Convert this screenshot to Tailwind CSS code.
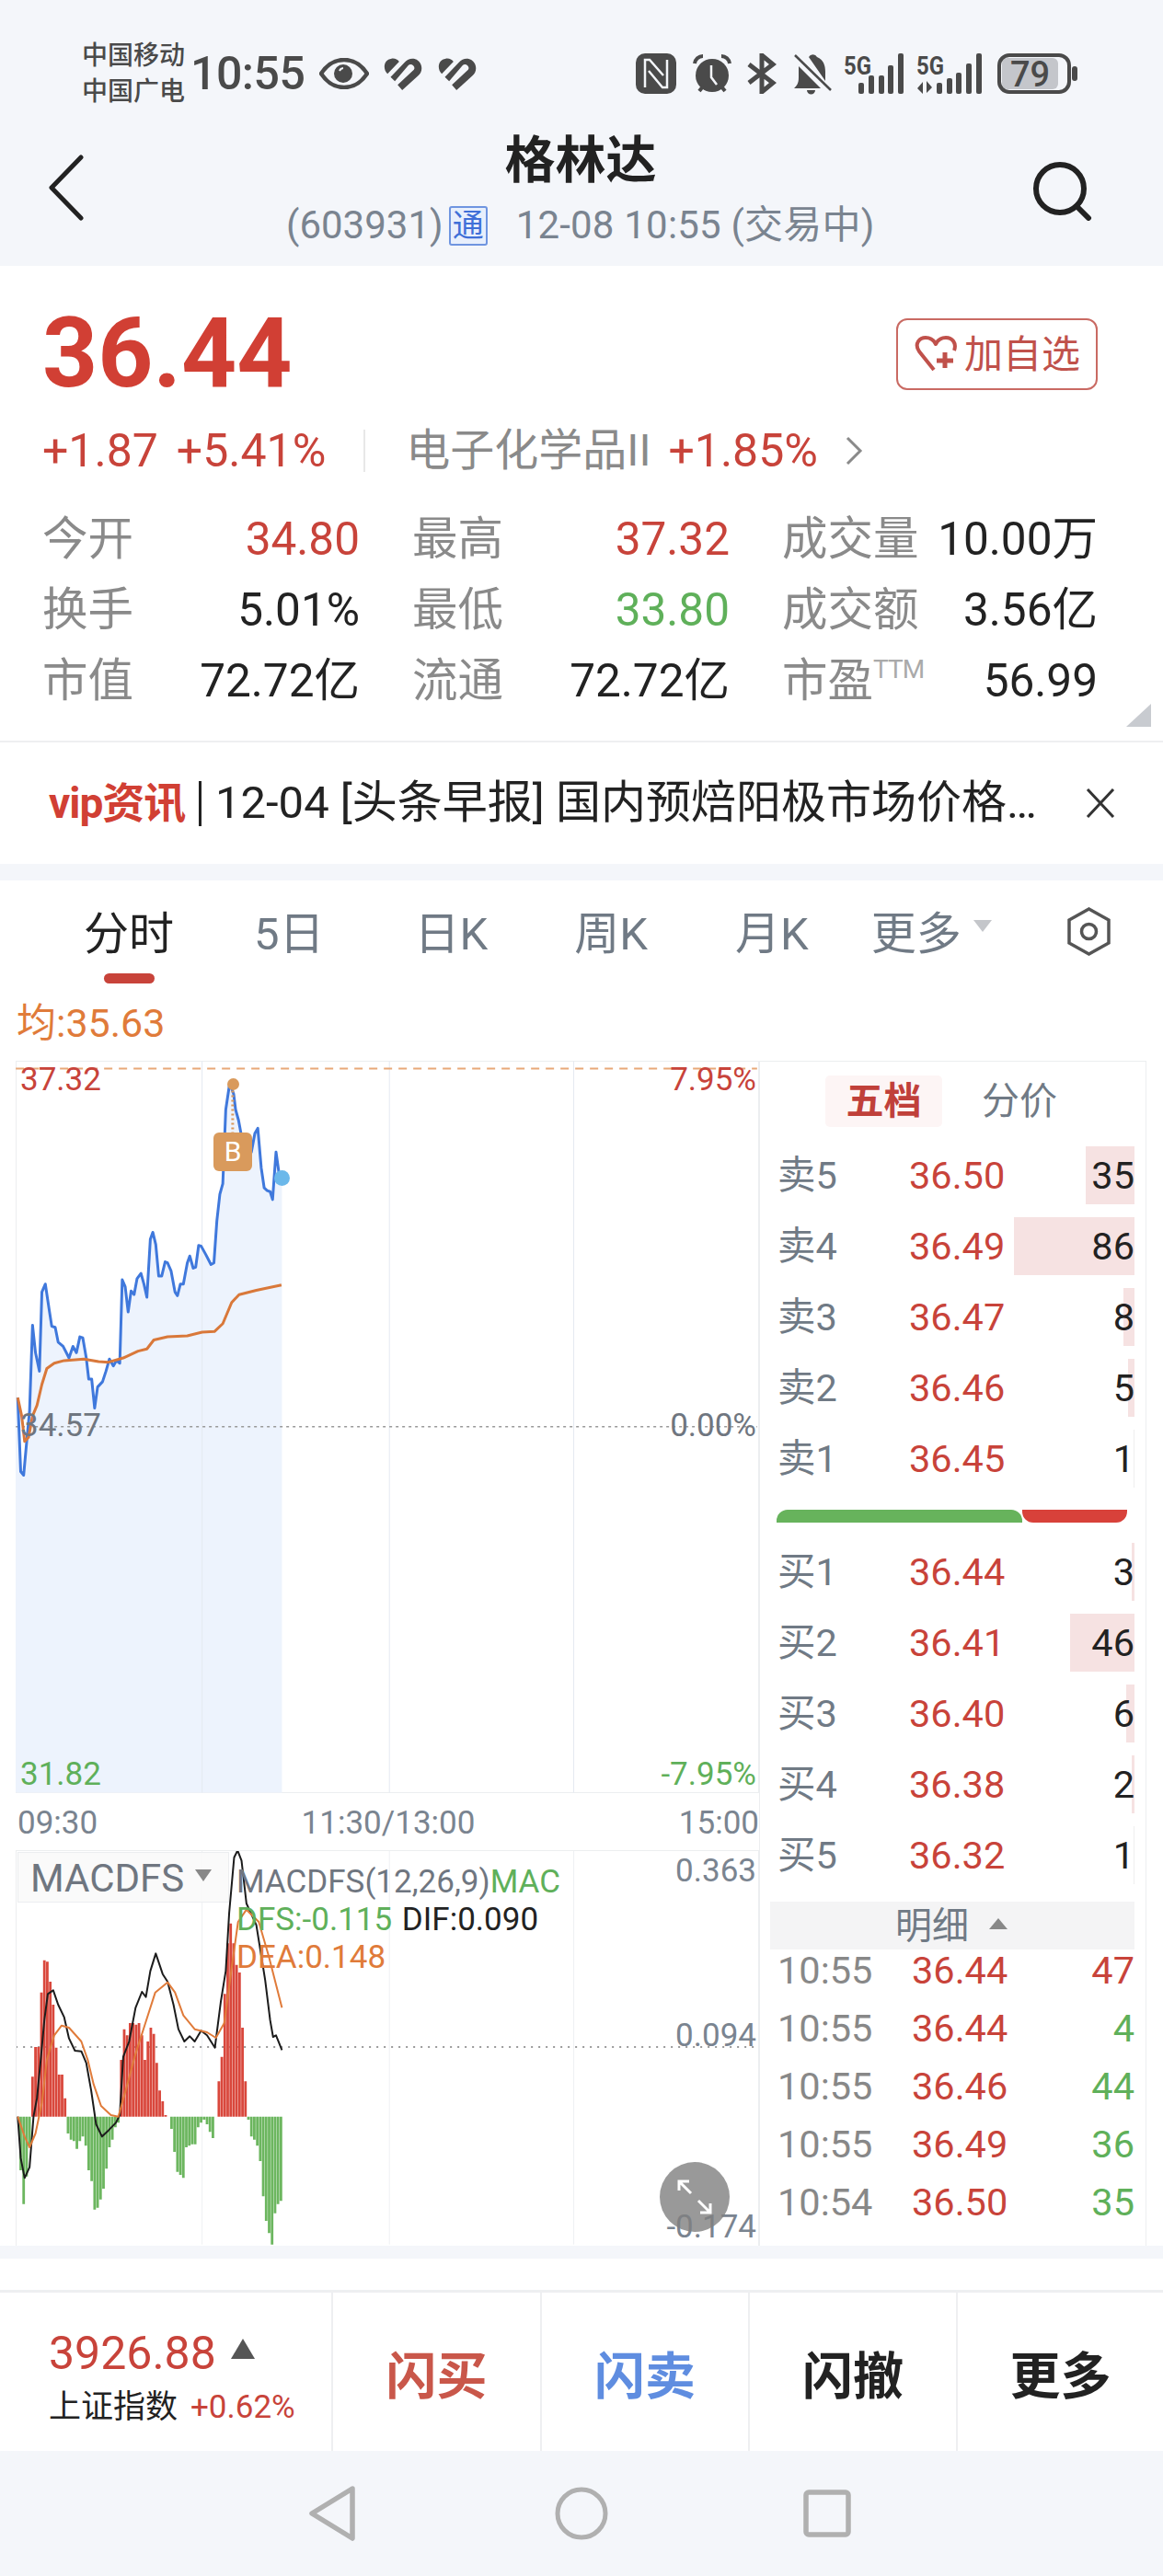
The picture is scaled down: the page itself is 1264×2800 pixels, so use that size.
<!DOCTYPE html>
<html lang="zh"><head><meta charset="utf-8">
<script src="https://cdn.jsdelivr.net/npm/@tailwindcss/browser@4"></script>
<title>格林达</title></head>
<body class="m-0">
<div class="w-[1264px] h-[2800px] bg-[#f4f6fa] overflow-hidden font-[Roboto,'Noto_Sans_CJK_SC',sans-serif] text-[#222]">

<!-- status + nav -->
<header class="h-[289px] relative">
  <div class="h-[130px] pt-[30px] flex items-center pl-[89px]">
    <div class="flex flex-col w-[118px] text-[28px] leading-[39px] font-medium text-[#4a4a4a] whitespace-nowrap"><span>中国移动</span><span>中国广电</span></div>
    <span class="text-[50px] leading-[48px] font-medium text-[#4a4a4a] w-[140px] tracking-[-0.5px]">10:55</span>
    <svg class="w-[54px] h-[34px]" viewBox="0 0 54 34"><path d="M2 17C10 5 18 2 27 2s17 3 25 15c-8 12-16 15-25 15S10 29 2 17z" fill="none" stroke="#4a4a4a" stroke-width="4.5"/><circle cx="26" cy="17" r="10" fill="#4a4a4a"/><path d="M22 14a5 5 0 0 1 4-3" stroke="#f4f6fa" stroke-width="2" fill="none"/></svg>
    <svg class="w-[42px] h-[35px] ml-[16px]" viewBox="0 0 125 105"><path d="M12 52C-5 35 0 5 25 2c10-2 20 3 25 10zM22 62L68 14C85-5 115 0 122 25c4 15-2 25-10 33L60 105 45 88 98 38c7-8-8-23-18-14L36 76z" fill="#4a4a4a"/></svg>
    <svg class="w-[42px] h-[35px] ml-[17px]" viewBox="0 0 125 105"><path d="M12 52C-5 35 0 5 25 2c10-2 20 3 25 10zM22 62L68 14C85-5 115 0 122 25c4 15-2 25-10 33L60 105 45 88 98 38c7-8-8-23-18-14L36 76z" fill="#4a4a4a"/></svg>
    <!-- right icons -->
    <svg class="w-[44px] h-[44px] ml-[173px]" viewBox="0 0 44 44"><rect width="44" height="44" rx="10" fill="#4a4a4a"/><path d="M10 37V7h5l15 17M34 7v30h-5L14 19" fill="none" stroke="#f4f6fa" stroke-width="2.5"/></svg>
    <svg class="w-[44px] h-[44px] ml-[17px]" viewBox="0 0 44 44"><circle cx="22" cy="24" r="18" fill="#4a4a4a"/><path d="M3 11a9 9 0 0 1 9-8M41 11a9 9 0 0 0-9-8M8 41l4-5M36 41l-4-5" stroke="#4a4a4a" stroke-width="4" fill="none"/><path d="M21 13v13l6 8" stroke="#f4f6fa" stroke-width="2.5" fill="none"/></svg>
    <svg class="w-[33px] h-[44px] ml-[16px]" viewBox="0 0 33 44"><path d="M2 12l26 20-12 10V2l12 10L2 32" fill="none" stroke="#4a4a4a" stroke-width="5"/></svg>
    <svg class="w-[42px] h-[46px] ml-[17px]" viewBox="0 0 42 46"><path d="M17 5a5 5 0 0 1 9 0c7 3 9 9 9 16v10zM6 15l24 24H1c3-3 5-5 5-12zM15 41h9a4.500 4.500 0 0 1-9 0z" fill="#4a4a4a"/><path d="M2 3l39 38" stroke="#4a4a4a" stroke-width="2.500"/></svg>
    <svg class="w-[66px] h-[46px] ml-[13px]" viewBox="0 0 66 46"><text x="0" y="24" font-size="27" font-weight="700" fill="#4a4a4a" textLength="30" lengthAdjust="spacingAndGlyphs">5G</text><g fill="#4a4a4a"><rect x="16" y="33" width="6" height="12" rx="2"/><rect x="27" y="25" width="6" height="20" rx="2"/><rect x="38" y="25" width="6" height="20" rx="2"/><rect x="48" y="14" width="6" height="31" rx="2"/><rect x="59" y="1" width="6" height="44" rx="2"/></g></svg>
    <svg class="w-[72px] h-[46px] ml-[13px]" viewBox="0 0 72 46"><text x="0" y="24" font-size="27" font-weight="700" fill="#4a4a4a" textLength="30" lengthAdjust="spacingAndGlyphs">5G</text><g fill="#4a4a4a"><path d="M7 32v13l-6-6zM11 31v13l6-6z"/><rect x="22" y="33" width="6" height="12" rx="2"/><rect x="33" y="28" width="6" height="17" rx="2"/><rect x="43" y="22" width="6" height="23" rx="2"/><rect x="54" y="12" width="6" height="33" rx="2"/><rect x="65" y="1" width="6" height="44" rx="2"/></g></svg>
    <svg class="w-[88px] h-[44px] ml-[16px]" viewBox="0 0 88 44"><rect x="5" y="5" width="61" height="34" rx="6" fill="#c4c6cb"/><rect x="2" y="2" width="76" height="40" rx="11" fill="none" stroke="#4a4a4a" stroke-width="4"/><rect x="81" y="14" width="6" height="16" rx="3" fill="#4a4a4a"/><text x="14" y="36" font-size="38" font-weight="500" fill="#4a4a4a">79</text></svg>
  </div>
  <div class="relative h-[159px] text-center">
    <svg class="absolute left-[52px] top-[38px] w-[40px] h-[72px]" viewBox="0 0 40 72"><path d="M36 3L4 36l32 33" fill="none" stroke="#222" stroke-width="5" stroke-linecap="round" stroke-linejoin="round"/></svg>
    <div class="text-[55px] leading-[54px] pt-[17px] font-bold -ml-[2px]">格林达</div>
    <div class="absolute left-[311px] top-[92px] flex items-center h-[46px] text-[42px] leading-[46px] text-[#7a8490] whitespace-nowrap">
      <span>(603931)</span>
      <span class="ml-[6px] w-[42px] h-[43px] border-2 border-[#6f95e0] bg-[#e8effc] rounded-[3px] text-[34px] leading-[38px] text-[#3f6fd8] text-center">通</span>
      <span class="ml-[31px] tracking-[0.2px]">12-08 10:55 (交易中)</span>
    </div>
    <svg class="absolute left-[1120px] top-[42px] w-[68px] h-[68px]" viewBox="0 0 68 68"><circle cx="32" cy="33" r="26" fill="none" stroke="#222" stroke-width="6"/><path d="M50 52l13 13" stroke="#222" stroke-width="6" stroke-linecap="round"/></svg>
  </div>
</header>

<!-- quote -->
<section class="relative h-[518px] bg-white border-b-2 border-[#eeeff1] pt-[57px]">
  <div class="flex items-center justify-between h-[78px] pl-[46px] pr-[71px]">
    <span class="text-[105px] leading-[78px] font-bold text-[#d13f34]">36.44</span>
    <div class="flex items-center w-[219px] h-[78px] border-2 border-[#c96a63] rounded-[12px] pl-[18px] text-[42px] text-[#c0514b]">
      <svg class="w-[48px] h-[40px] mr-[6px]" viewBox="0 0 48 40"><path d="M21 37L5 17C-1 8 6 2 12 2c5 0 9 3 11 7 2-4 6-7 11-7 7 0 12 6 9 14" fill="none" stroke="#c0514b" stroke-width="4" stroke-linejoin="round"/><path d="M33 18v17M24 27h18" stroke="#c0514b" stroke-width="5"/></svg>
      <span>加自选</span>
    </div>
  </div>
  <div class="flex items-center h-[46px] mt-[43px] pl-[46px] text-[50px] leading-[46px] whitespace-nowrap">
    <span class="text-[#c8433a]">+1.87</span>
    <span class="text-[#c8433a] ml-[20px]">+5.41%</span>
    <span class="w-[2px] h-[46px] bg-[#e8e8e8] ml-[41px]"></span>
    <span class="text-[#8a8a8a] text-[48px] ml-[44px]">电子化学品II</span>
    <span class="text-[#c8433a] ml-[19px]">+1.85%</span>
    <svg class="w-[20px] h-[34px] ml-[29px]" viewBox="0 0 20 34"><path d="M3 3l14 14L3 31" fill="none" stroke="#8a8a8a" stroke-width="3"/></svg>
  </div>
  <div class="grid grid-cols-[345px_345px_343px] gap-x-[57px] pl-[46px] mt-[35px] text-[49.5px] leading-[77px] whitespace-nowrap">
    <div class="flex justify-between"><span class="text-[#8a8a8a]">今开</span><span class="text-[#c8433a]">34.80</span></div>
    <div class="flex justify-between"><span class="text-[#8a8a8a]">最高</span><span class="text-[#c8433a]">37.32</span></div>
    <div class="flex justify-between"><span class="text-[#8a8a8a]">成交量</span><span>10.00万</span></div>
    <div class="flex justify-between"><span class="text-[#8a8a8a]">换手</span><span>5.01%</span></div>
    <div class="flex justify-between"><span class="text-[#8a8a8a]">最低</span><span class="text-[#5fb05a]">33.80</span></div>
    <div class="flex justify-between"><span class="text-[#8a8a8a]">成交额</span><span>3.56亿</span></div>
    <div class="flex justify-between"><span class="text-[#8a8a8a]">市值</span><span>72.72亿</span></div>
    <div class="flex justify-between"><span class="text-[#8a8a8a]">流通</span><span>72.72亿</span></div>
    <div class="flex justify-between"><span class="text-[#8a8a8a]">市盈<sup class="text-[28px] leading-none align-[20px] text-[#aaa] tracking-[-1px] static">TTM</sup></span><span>56.99</span></div>
  </div>
  <svg class="absolute left-[1224px] top-[476px] w-[27px] h-[25px]" viewBox="0 0 27 25"><path d="M0 25L27 0v25z" fill="#c8cbd0"/></svg>
</section>

<!-- news -->
<section class="h-[132px] bg-white flex items-center pl-[53px] whitespace-nowrap">
  <span class="text-[46px] font-bold text-[#d13f34] w-[163px] tracking-[-1px]">vip资讯</span>
  <span class="w-[3px] h-[49px] bg-[#222]"></span>
  <span class="ml-[15px] text-[49px] leading-[50px] w-[891px]">12-04 [头条早报] 国内预焙阳极市场价格…</span>
  <svg class="w-[32px] h-[32px] ml-[55px]" viewBox="0 0 32 32"><path d="M2 1l28 30M30 1L2 31" stroke="#333" stroke-width="3" fill="none"/></svg>
</section>

<!-- market -->
<main class="mt-[18px] h-[1484px] bg-white overflow-hidden">
  <div class="relative h-[118px] flex items-center pl-[91px] text-[49px] leading-[118px] text-[#707a85] whitespace-nowrap">
    <span class="text-[#222]">分时</span>
    <span class="ml-[87px]">5日</span>
    <span class="ml-[98px]">日K</span>
    <span class="ml-[94px]">周K</span>
    <span class="ml-[95px]">月K</span>
    <span class="ml-[68px]">更多</span>
    <svg class="absolute left-[1058px] top-[43px] w-[20px] h-[13px]" viewBox="0 0 20 13"><path d="M0 0h20L10 13z" fill="#c4c6ca"/></svg>
    <svg class="absolute left-[1160px] top-[29px] w-[47px] h-[53px]" viewBox="0 0 47 53"><path d="M23.500 2L45 14v25L23.500 51 2 39V14z" fill="none" stroke="#555" stroke-width="3.500"/><circle cx="23.500" cy="26.500" r="8" fill="none" stroke="#555" stroke-width="3.500"/></svg>
    <span class="absolute left-[113px] top-[101px] w-[55px] h-[11px] rounded-full bg-[#c8433a]"></span>
  </div>
  <div class="h-[78px] pl-[18px] text-[43px] leading-[74px] text-[#e07b3a]">均:35.63</div>

  <div class="flex">
    <!-- left charts -->
    <div class="w-[808px] ml-[17px] shrink-0">
      <div class="relative h-[796px] border border-[#eceef0]">
        <svg class="absolute left-[-18px] top-[-74px] w-[840px] h-[900px]" viewBox="0 0 1568 1568" preserveAspectRatio="none" fill="none">
          <path fill="#edf3fd" d="M36 765 42 905 48 912 54 850 60 790 66 628 72 680 80 715 85 565 92 550 100 600 105 630 112 632 118 660 128 668 140 690 148 668 155 680 162 650 168 652 175 690 180 730 186 730 192 785 198 745 208 735 215 715 222 692 230 705 236 695 243 700 248 542 254 555 260 603 266 563 272 570 278 540 286 530 292 550 298 575 305 465 310 452 316 475 322 535 328 535 335 508 340 510 347 525 355 565 360 572 366 550 372 550 380 510 385 497 392 520 397 518 403 477 408 478 418 495 428 513 434 510 440 430 446 380 452 360 458 220 466 170 474 190 478 220 484 240 490 270 500 320 510 300 517 265 523 255 530 330 536 368 542 373 548 375 553 390 560 300 566 340 572 349V1513H32V765z"/>
          <path d="M410 128V1513M790 128V1513M1164 128V1513" stroke="#e4e9f1" stroke-width="1" vector-effect="non-scaling-stroke"/>
          <path d="M32 142H1536" stroke="#e8a878" stroke-width="2" stroke-dasharray="9 7" vector-effect="non-scaling-stroke"/>
          <path d="M32 820H1536" stroke="#9a9a9a" stroke-width="1.500" stroke-dasharray="3 4" vector-effect="non-scaling-stroke"/>
          <path d="M36 765 42 905 48 912 54 850 60 790 66 628 72 680 80 715 85 565 92 550 100 600 105 630 112 632 118 660 128 668 140 690 148 668 155 680 162 650 168 652 175 690 180 730 186 730 192 785 198 745 208 735 215 715 222 692 230 705 236 695 243 700 248 542 254 555 260 603 266 563 272 570 278 540 286 530 292 550 298 575 305 465 310 452 316 475 322 535 328 535 335 508 340 510 347 525 355 565 360 572 366 550 372 550 380 510 385 497 392 520 397 518 403 477 408 478 418 495 428 513 434 510 440 430 446 380 452 360 458 220 466 170 474 190 478 220 484 240 490 270 500 320 510 300 517 265 523 255 530 330 536 368 542 373 548 375 553 390 560 300 566 340 572 349" stroke="#3f78dc" stroke-width="3" stroke-linejoin="round" vector-effect="non-scaling-stroke"/>
          <path d="M36 765 44 800 50 848 58 840 66 800 75 780 85 740 95 710 110 700 130 695 170 692 200 697 220 698 250 690 280 677 298 673 312 656 340 650 380 648 410 641 435 640 452 625 470 585 485 570 520 562 571 552" stroke="#d9783a" stroke-width="3" stroke-linejoin="round" vector-effect="non-scaling-stroke"/>
          <path d="M472 175V265" stroke="#d99a5c" stroke-width="3" stroke-dasharray="2 3" vector-effect="non-scaling-stroke"/>
        </svg>
        <span class="absolute left-[229px] top-[18px] w-[13px] h-[13px] rounded-full bg-[#d99a5c]"></span>
        <span class="absolute left-[214px] top-[77px] w-[42px] h-[42px] rounded-[6px] bg-[#d99a5c] text-white text-[30px] leading-[42px] text-center">B</span>
        <span class="absolute left-[280px] top-[118px] w-[17px] h-[17px] rounded-full bg-[#6bb8ea]"></span>
        <span class="absolute left-[4px] top-[0px] text-[35px] leading-[40px] text-[#c8433a]">37.32</span>
        <span class="absolute right-[2px] top-[0px] text-[35px] leading-[40px] text-[#c8433a]">7.95%</span>
        <span class="absolute left-[4px] top-[376px] text-[35px] leading-[40px] text-[#6f7680]">34.57</span>
        <span class="absolute right-[2px] top-[376px] text-[35px] leading-[40px] text-[#6f7680]">0.00%</span>
        <span class="absolute left-[4px] top-[755px] text-[35px] leading-[40px] text-[#5fb05a]">31.82</span>
        <span class="absolute right-[2px] top-[755px] text-[35px] leading-[40px] text-[#5fb05a]">-7.95%</span>
      </div>
      <div class="flex justify-between h-[62px] pt-[2px] text-[35px] leading-[62px] text-[#7a8490] pl-[2px]">
        <span>09:30</span><span>11:30/13:00</span><span>15:00</span>
      </div>
      <div class="relative h-[440px] border border-[#eceef0] overflow-hidden">
        <svg class="absolute left-[-18px] top-[-33px] w-[840px] h-[480px]" viewBox="0 0 1568 1440" preserveAspectRatio="none" fill="none">
          <path d="M410 97V1382M790 97V1382M1164 97V1382" stroke="#eef0f3" stroke-width="1" vector-effect="non-scaling-stroke"/>
          <path d="M32 738H1536" stroke="#9a9a9a" stroke-width="2" stroke-dasharray="2 6" vector-effect="non-scaling-stroke"/>
          <path stroke="#6cb65f" stroke-width="2.800" vector-effect="non-scaling-stroke" d="M42 965V1140M48 965V1250M54 965V1160M60 965V1060M138 965V1020M144 965V1040M150 965V1045M156 965V1070M162 965V1045M168 965V1030M174 965V1060M180 965V1140M186 965V1175M192 965V1268M198 965V1262M204 965V1235M210 965V1200M216 965V1135M222 965V1065M228 965V1040M234 965V1000M240 965V985M348 965V1005M354 965V1080M360 965V1145M366 965V1155M372 965V1165M378 965V1065M384 965V1060M390 965V1055M396 965V1055M402 965V1000M408 965V985M414 965V975M420 965V990M426 965V1015M432 965V1035M504 965V975M510 965V1030M516 965V1040M522 965V1060M528 965V1110M534 965V1225M540 965V1305M546 965V1345M552 965V1382M558 965V1280M564 965V1250M570 965V1240"/>
          <path stroke="#d9473c" stroke-width="2.800" vector-effect="non-scaling-stroke" d="M66 965V835M72 965V738M78 965V738M84 965V560M90 965V455M96 965V460M102 965V525M108 965V600M114 965V740M120 965V828M126 965V828M132 965V905M246 965V780M252 965V680M258 965V700M264 965V660M270 965V660M276 965V665M282 965V660M288 965V700M294 965V780M300 965V720M306 965V675M312 965V695M318 965V790M324 965V880M330 965V915M336 965V960M444 965V850M450 965V770M456 965V565M462 965V400M468 965V335M474 965V400M480 965V470M486 965V495M492 965V675M498 965V850"/>
          <path d="M36 965 42 1100 50 1165 60 1130 68 965 75 905 82 790 90 650 97 565 108 553 118 600 130 640 140 710 152 750 165 752 175 790 185 880 195 990 207 1030 220 1010 235 985 243 960 250 770 262 720 275 610 288 558 296 575 305 490 316 433 330 500 340 525 352 600 362 680 374 720 385 703 395 720 408 685 420 700 436 740 448 590 458 490 465 300 475 120 482 97 490 130 500 270 520 340 530 440 538 520 548 650 554 705 560 700 572 748" stroke="#1c1c1c" stroke-width="2" stroke-linejoin="round" vector-effect="non-scaling-stroke"/>
          <path d="M36 965 50 1030 60 1065 72 1020 85 920 95 780 110 700 125 668 140 675 165 720 178 780 190 860 205 930 225 960 240 965 255 880 275 760 295 660 315 560 340 527 355 560 372 635 395 680 420 690 438 708 455 660 470 480 483 330 500 290 525 330 545 440 572 610" stroke="#e07b3a" stroke-width="2" stroke-linejoin="round" vector-effect="non-scaling-stroke"/>
        </svg>
        <div class="absolute left-[1px] top-[1px] w-[230px] h-[55px] bg-[#fafafa]/90 border border-[#eceef0] flex items-center pl-[13px] pt-[2px] text-[42px] leading-[50px] text-[#6f7680]">MACDFS<svg class="w-[18px] h-[13px] ml-[12px] -mt-[6px]" viewBox="0 0 18 13"><path d="M0 0h18L9 13z" fill="#888"/></svg></div>
        <div class="absolute left-[239px] top-[13px] text-[35px] leading-[41px] whitespace-nowrap">
          <div class="text-[#6f7680]">MACDFS(12,26,9)<span class="text-[#5fb05a]">MAC</span></div>
          <div class="text-[#5fb05a]">DFS:-0.115 <span class="text-[#222] ml-[2px]">DIF:0.090</span></div>
          <div class="text-[#e07b3a]">DEA:0.148</div>
        </div>
        <span class="absolute right-[2px] top-[2px] text-[35px] leading-[40px] text-[#7a8490]">0.363</span>
        <span class="absolute right-[2px] top-[181px] text-[35px] leading-[40px] text-[#7a8490]">0.094</span>
        <span class="absolute right-[2px] top-[389px] text-[35px] leading-[40px] text-[#7a8490]">-0.174</span>
        <div class="absolute left-[699px] top-[338px] w-[76px] h-[76px] rounded-full bg-[#808080]/80 flex items-center justify-center">
          <svg class="w-[40px] h-[40px]" viewBox="0 0 40 40"><path d="M3 13V3h11M3 3l13 13M37 27v10H26M37 37L24 24" fill="none" stroke="#fff" stroke-width="3"/></svg>
        </div>
      </div>
    </div>

    <!-- order book -->
    <aside class="relative z-10 w-[421px] h-[1288px] border border-b-0 border-[#eceef0] text-[41.5px] leading-[63px] whitespace-nowrap overflow-hidden">
      <div class="flex h-[92px] pt-[15px] pl-[71px]">
        <span class="w-[127px] h-[56px] rounded-[5px] bg-[#fdf5f5] text-[41px] leading-[56px] font-bold text-center text-[#c0403a]">五档</span>
        <span class="ml-[43px] text-[41px] leading-[56px] text-[#707a85]">分价</span>
      </div>

      <div class="relative flex h-[63px] mb-[14px] pl-[19px] pr-[12px]"><span class="absolute right-[12px] inset-y-0 w-[53px] bg-[#f6e2e2]"></span><span class="relative w-[143px] text-[#707a85]">卖5</span><span class="relative text-[#c8433a]">36.50</span><span class="relative ml-auto">35</span></div>
      <div class="relative flex h-[63px] mb-[14px] pl-[19px] pr-[12px]"><span class="absolute right-[12px] inset-y-0 w-[131px] bg-[#f6e2e2]"></span><span class="relative w-[143px] text-[#707a85]">卖4</span><span class="relative text-[#c8433a]">36.49</span><span class="relative ml-auto">86</span></div>
      <div class="relative flex h-[63px] mb-[14px] pl-[19px] pr-[12px]"><span class="absolute right-[12px] inset-y-0 w-[12px] bg-[#f6e2e2]"></span><span class="relative w-[143px] text-[#707a85]">卖3</span><span class="relative text-[#c8433a]">36.47</span><span class="relative ml-auto">8</span></div>
      <div class="relative flex h-[63px] mb-[14px] pl-[19px] pr-[12px]"><span class="absolute right-[12px] inset-y-0 w-[7px] bg-[#f6e2e2]"></span><span class="relative w-[143px] text-[#707a85]">卖2</span><span class="relative text-[#c8433a]">36.46</span><span class="relative ml-auto">5</span></div>
      <div class="relative flex h-[63px] pl-[19px] pr-[12px]"><span class="absolute right-[12px] inset-y-0 w-[1px] bg-[#eee]"></span><span class="relative w-[143px] text-[#707a85]">卖1</span><span class="relative text-[#c8433a]">36.45</span><span class="relative ml-auto">1</span></div>

      <div class="flex h-[14px] mt-[24px] ml-[18px]">
        <span class="w-[267px] bg-[#67b35c] rounded-t-[12px]"></span>
        <span class="w-[114px] bg-[#d8413a] rounded-b-[12px]"></span>
      </div>

      <div class="relative flex h-[63px] mt-[22px] mb-[14px] pl-[19px] pr-[12px]"><span class="absolute right-[12px] inset-y-0 w-[3px] bg-[#f6e2e2]"></span><span class="relative w-[143px] text-[#707a85]">买1</span><span class="relative text-[#c8433a]">36.44</span><span class="relative ml-auto">3</span></div>
      <div class="relative flex h-[63px] mb-[14px] pl-[19px] pr-[12px]"><span class="absolute right-[12px] inset-y-0 w-[70px] bg-[#f6e2e2]"></span><span class="relative w-[143px] text-[#707a85]">买2</span><span class="relative text-[#c8433a]">36.41</span><span class="relative ml-auto">46</span></div>
      <div class="relative flex h-[63px] mb-[14px] pl-[19px] pr-[12px]"><span class="absolute right-[12px] inset-y-0 w-[9px] bg-[#f6e2e2]"></span><span class="relative w-[143px] text-[#707a85]">买3</span><span class="relative text-[#c8433a]">36.40</span><span class="relative ml-auto">6</span></div>
      <div class="relative flex h-[63px] mb-[14px] pl-[19px] pr-[12px]"><span class="absolute right-[12px] inset-y-0 w-[3px] bg-[#f6e2e2]"></span><span class="relative w-[143px] text-[#707a85]">买4</span><span class="relative text-[#c8433a]">36.38</span><span class="relative ml-auto">2</span></div>
      <div class="relative flex h-[63px] pl-[19px] pr-[12px]"><span class="absolute right-[12px] inset-y-0 w-[1px] bg-[#eee]"></span><span class="relative w-[143px] text-[#707a85]">买5</span><span class="relative text-[#c8433a]">36.32</span><span class="relative ml-auto">1</span></div>

      <div class="relative h-[52px] mt-[19px] ml-[11px] mr-[12px] bg-[#f4f4f5] text-center text-[40px] leading-[54px] text-[#707a85]">
        <span class="absolute left-[136px] top-0">明细</span>
        <svg class="absolute left-[238px] top-[18px] w-[20px] h-[12px]" viewBox="0 0 20 12"><path d="M10 0l10 12H0z" fill="#888"/></svg>
      </div>
      <div class="-mt-[9px] relative">
        <div class="flex h-[63px] pl-[19px] pr-[12px]"><span class="w-[146px] text-[#888]">10:55</span><span class="text-[#c8433a]">36.44</span><span class="ml-auto text-[#c8433a]">47</span></div>
        <div class="flex h-[63px] pl-[19px] pr-[12px]"><span class="w-[146px] text-[#888]">10:55</span><span class="text-[#c8433a]">36.44</span><span class="ml-auto text-[#5fb05a]">4</span></div>
        <div class="flex h-[63px] pl-[19px] pr-[12px]"><span class="w-[146px] text-[#888]">10:55</span><span class="text-[#c8433a]">36.46</span><span class="ml-auto text-[#5fb05a]">44</span></div>
        <div class="flex h-[63px] pl-[19px] pr-[12px]"><span class="w-[146px] text-[#888]">10:55</span><span class="text-[#c8433a]">36.49</span><span class="ml-auto text-[#5fb05a]">36</span></div>
        <div class="flex h-[63px] pl-[19px] pr-[12px]"><span class="w-[146px] text-[#888]">10:54</span><span class="text-[#c8433a]">36.50</span><span class="ml-auto text-[#5fb05a]">35</span></div>
      </div>
    </aside>
  </div>
</main>

<!-- bottom bar -->
<div class="h-[14px]"></div>
<div class="h-[34px] bg-white"></div>
<div class="h-[175px] bg-white border-t-[3px] border-[#eeeff1] flex">
  <div class="w-[360px] pl-[53px] whitespace-nowrap">
    <div class="flex h-[105px] items-start pt-[36px]">
      <span class="text-[50px] leading-[60px] text-[#c8433a]">3926.88</span>
      <svg class="w-[26px] h-[22px] ml-[16px] mt-[14px]" viewBox="0 0 26 22"><path d="M13 0l13 22H0z" fill="#555"/></svg>
    </div>
    <div class="flex items-center h-[40px] text-[35px] leading-[40px]"><span>上证指数</span><span class="ml-[14px] text-[#c8433a]">+0.62%</span></div>
  </div>
  <div class="w-[227px] pt-[10px] border-l-2 border-[#eeeff1] flex items-center justify-center text-[55px] font-bold text-[#c9574a]">闪买</div>
  <div class="w-[226px] pt-[10px] border-l-2 border-[#eeeff1] flex items-center justify-center text-[55px] font-bold text-[#5f8de0]">闪卖</div>
  <div class="w-[226px] pt-[10px] border-l-2 border-[#eeeff1] flex items-center justify-center text-[55px] font-bold">闪撤</div>
  <div class="w-[225px] pt-[10px] border-l-2 border-[#eeeff1] flex items-center justify-center text-[55px] font-bold">更多</div>
</div>

<!-- android nav -->
<nav class="h-[136px] flex items-center pl-[335px]">
  <svg class="w-[52px] h-[60px]" viewBox="0 0 52 60"><path d="M48 3L4 30l44 27z" fill="none" stroke="#b0b0b0" stroke-width="5.500" stroke-linejoin="round"/></svg>
  <svg class="w-[58px] h-[58px] ml-[216px]" viewBox="0 0 58 58"><circle cx="29" cy="29" r="26" fill="none" stroke="#b0b0b0" stroke-width="5"/></svg>
  <svg class="w-[52px] h-[52px] ml-[212px]" viewBox="0 0 52 52"><rect x="3" y="3" width="46" height="46" rx="3" fill="none" stroke="#b0b0b0" stroke-width="5.500"/></svg>
</nav>

</div>
</body></html>
